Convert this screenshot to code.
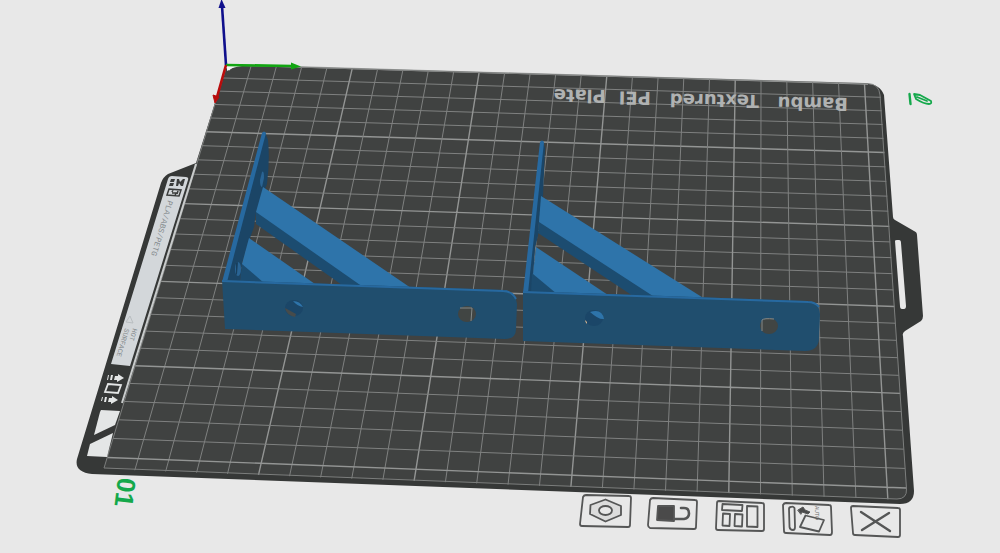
import React from 'react';

type Point = [number, number];

const SCENE_WIDTH = 1000;
const SCENE_HEIGHT = 553;
const BED_SIZE = 256;

// Screen corners of the printable area: back left, back right, front right, front left
const BED_CORNERS: Point[] = [
  [226, 65],
  [880, 84],
  [907, 500],
  [104, 469],
];

const createProjection = ([p0, p1, p2, p3]: Point[]) => {
  const dx1 = p1[0] - p2[0];
  const dx2 = p3[0] - p2[0];
  const dx3 = p0[0] - p1[0] + p2[0] - p3[0];
  const dy1 = p1[1] - p2[1];
  const dy2 = p3[1] - p2[1];
  const dy3 = p0[1] - p1[1] + p2[1] - p3[1];
  const det = dx1 * dy2 - dx2 * dy1;
  const g = (dx3 * dy2 - dx2 * dy3) / det;
  const h = (dx1 * dy3 - dx3 * dy1) / det;

  return (x: number, y: number): Point => {
    const u = x / BED_SIZE;
    const v = y / BED_SIZE;
    const w = g * u + h * v + 1;
    return [
      ((p1[0] - p0[0] + g * p1[0]) * u + (p3[0] - p0[0] + h * p3[0]) * v + p0[0]) / w,
      ((p1[1] - p0[1] + g * p1[1]) * u + (p3[1] - p0[1] + h * p3[1]) * v + p0[1]) / w,
    ];
  };
};

const project = createProjection(BED_CORNERS);

const linePath = (from: Point, to: Point) => `M${from.join(' ')}L${to.join(' ')}`;

const BedGrid: React.FC = () => {
  const steps = Array.from({ length: 25 }, (_, i) => (i + 1) * 10);

  return (
    <g fill="none">
      {steps.map((mm) => (
        <path
          key={mm}
          d={
            linePath(project(mm, 0), project(mm, BED_SIZE)) +
            linePath(project(0, mm), project(BED_SIZE, mm))
          }
          stroke={mm % 50 === 0 ? '#939594' : '#7f8180'}
          strokeWidth={mm % 50 === 0 ? 1.4 : 1}
        />
      ))}
      <path
        d="M240 65.500L868 83.600Q879 84 880 95L906.500 489Q907 499 897 499L104 468L226 68"
        stroke="#7c7e7d"
      />
      <path d="M196 164L122 403" stroke="#c9cccc" strokeWidth="2" />
    </g>
  );
};

const Plate: React.FC = () => (
  <g>
    <path
      d="M229 71Q233 66 242 65.500L866 84Q880 84 884 95L893 217Q893 219 895 220L914 231Q917 232 917 235L923 316Q923 319 921 321L905 331Q902 333 903 336L914 491Q914 504 900 504L92 474Q74 472 77 459L161 183Q163 177 168 174L196 163L226 68Z"
      fill="#363837"
    />
    <path
      d="M229 71Q233 66 242 65.500L866 84Q880 84 880.500 96L907 490Q907 499 898 499L104 468L226 68Z"
      fill="#404241"
    />
    <path d="M240 65L868 84" stroke="#a3a5a4" strokeWidth="1.500" />
    <path d="M227 66L242 66Q232 67 227 71Z" fill="#f5f5f5" />
    <path d="M895 241Q895 240 897 240L899 240Q901 240 901 243L906 306Q906 309 904 309L902 309Q900 309 900 306Z" fill="#e8e8e8" />
  </g>
);

const SideLabel: React.FC = () => (
  <g>
    <path d="M172 176L186 177Q189 177 188 180L130 366L111 364L168 179Q169 176 172 176Z" fill="#d3d7da" />
    <g fill="#3a3c3b">
      <path d="M171 179L175 179L174 182L170 182ZM177 179L179 179L180 182L183 179L185 179L183 186L181 186L179 183L178 186L176 186ZM170 183L174 183L173 186L169 186Z" />
      <path
        d="M169 189L181 190L179 196L167 195ZM173 190L172 192M172 193L176 193L175 196M178 191L177 194"
        fill="none"
        stroke="#3a3c3b"
        strokeWidth="1.500"
      />
    </g>
    <g fill="#858b8e" fontFamily='"Liberation Mono", monospace'>
      <text transform="translate(168 200) rotate(107)" fontSize="8">PLA/ABS/PETG</text>
      <text transform="translate(133 328) rotate(107)" fontSize="7">HOT</text>
      <text transform="translate(125 328) rotate(107)" fontSize="7">SURFACE</text>
    </g>
    <path d="M130 316L133 323L126 322Z" fill="none" stroke="#b9bec1" />
    <g fill="#e4e6e6">
      <path d="M118 374L124 378L117 382L117 380L114 380L115 376L118 376ZM111 375L113 375L112 380L110 380ZM108 375L109 375L108 380L107 380Z" />
      <path d="M112 396L118 400L111 404L111 402L108 402L109 398L112 398ZM105 397L107 397L106 402L104 402ZM102 397L103 397L102 401L101 401Z" />
      <path d="M101 410L120 411L115 425L94 435L100 412Z" />
      <path d="M113 433L107 457L87 456L90 444Z" />
    </g>
    <path d="M108 384L121 385L118 393L105 392Z" fill="none" stroke="#e4e6e6" strokeWidth="1.800" />
  </g>
);

const PlateTitle: React.FC = () => (
  <g fill="#b0b2b2" fontFamily='"DejaVu Sans", sans-serif' fontWeight="bold" fontSize="18">
    <text transform="translate(848 98) rotate(181)">Bambu</text>
    <text transform="translate(759 95) rotate(181)">Textured</text>
    <text transform="translate(651 92) rotate(181)">PEI</text>
    <text transform="translate(606 90) rotate(181)">Plate</text>
  </g>
);

const Axes: React.FC = () => (
  <g strokeWidth="2.600">
    <path d="M226 65L222 6" stroke="#10108c" />
    <path d="M221.500 -1L225.500 8L218.500 8Z" fill="#10108c" />
    <path d="M226 65L292 66" stroke="#12a512" />
    <path d="M301 66.500L291 69.500L291 62.500Z" fill="#12a512" />
    <path d="M226 65L217 97" stroke="#b80c0c" />
    <path d="M215 103L213 95L219 97Z" fill="#b80c0c" stroke="#b80c0c" strokeWidth="1" />
  </g>
);

const LIGHT = '#2e74aa';
const EDGE = '#2769a0';
const SIDE = '#1c4c70';
const FRONT = '#204e6e';

const LeftBracket: React.FC = () => (
  <g>
    <path d="M265 132L268 140Q270 160 267 184L256 212L254 227L250 238L242 263L240 282L226 281Z" fill="#1b4566" />
    <path d="M262 172Q264 170 264 178L262 187Q260 187 260 180Z" fill="#2a6494" />
    <ellipse cx="238" cy="269" rx="3" ry="7" fill="#2a6494" />
    <path d="M236 263L238 262L237 274L236 275Z" fill="#183f5d" />
    <path d="M256 211L364 285L342 285L256 224Z" fill={SIDE} />
    <path d="M263 187L411 288L363 287L256 212Z" fill={LIGHT} />
    <path d="M242 263L266 282L240 282Z" fill={SIDE} />
    <path d="M249 238L315 284L264 283L242 264Z" fill={LIGHT} />
    <path d="M262 133Q264 130 266 133L227 282L222 282Z" fill={EDGE} />
    <path d="M222 280L503 290Q516 291 517 304L516 329Q516 339 505 339L225 329Z" fill={FRONT} />
    <path d="M222 281L503 291Q512 291 516 299" fill="none" stroke={EDGE} strokeWidth="2" />
    <ellipse cx="294" cy="308" rx="9" ry="8" fill="#1b4668" />
    <path d="M293 301Q300 301 303 307Q297 306 293 301Z" fill={LIGHT} />
    <path d="M285 308L296 314L295 317Q286 315 285 308Z" fill="#464b4b" />
    <ellipse cx="467" cy="314" rx="9" ry="8" fill="#414543" />
    <path d="M460 308L472 308L471 321" fill="none" stroke="#858a89" />
  </g>
);

const RightBracket: React.FC = () => (
  <g>
    <path d="M543 142L545 148L543 196L539 222L538 236L535 248L532 292L526 292Z" fill="#1b4566" />
    <path d="M539 221L658 296L633 296L538 233Z" fill={SIDE} />
    <path d="M541 196L705 299L656 298L539 222Z" fill={LIGHT} />
    <path d="M532 273L560 293L531 292Z" fill={SIDE} />
    <path d="M536 247L608 295L557 294L533 274Z" fill={LIGHT} />
    <path d="M540 142Q542 139 544 142L528 293L523 293Z" fill={EDGE} />
    <path d="M523 291L808 301Q819 302 820 314L819 339Q818 351 805 351L523 341Z" fill={FRONT} />
    <path d="M523 292L808 302Q815 302 819 307" fill="none" stroke={EDGE} strokeWidth="2" />
    <ellipse cx="594" cy="318" rx="9" ry="8" fill="#1b4668" />
    <path d="M590 312Q602 308 604 319Q599 320 590 312Z" fill={LIGHT} />
    <path d="M585 320L587 322L587 324Q585 322 585 320Z" fill="#d7b48f" />
    <ellipse cx="769" cy="326" rx="9" ry="8" fill="#414543" />
    <path d="M762 331L762 320Q764 318 774 319" fill="none" stroke="#858a89" />
  </g>
);

interface PlateAction {
  label: string;
  x: number;
  y: number;
  width: number;
  height: number;
  drawing: React.ReactNode;
}

const plateActions: PlateAction[] = [
  {
    label: 'Plate settings',
    x: 578,
    y: 492,
    width: 56,
    height: 38,
    drawing: (
      <>
        <path d="M586 495L629 496Q631 496 631 498L630 525Q630 527 628 527L582 526Q580 526 580 524L583 497Q584 495 586 495Z" />
        <path d="M605.500 499.500L621 506L621 515L605.500 521.500L590 514L590.500 505Z" fill="#dcdcdc" />
        <ellipse cx="605.500" cy="510.500" rx="6.500" ry="4.500" fill="#e8e8e8" />
      </>
    ),
  },
  {
    label: 'Lock plate',
    x: 646,
    y: 495,
    width: 54,
    height: 37,
    drawing: (
      <>
        <path d="M653 498L695 500Q697 500 697 502L696 527Q696 529 694 529L650 528Q648 527 648 525L650 500Q651 498 653 498Z" />
        <path d="M658 506L674 506L674 521L657 520Z" fill="#4a4a4a" />
        <path d="M674 519L684 519Q689 518 689 513.500Q689 508 684 508L681 508" strokeWidth="2.600" />
      </>
    ),
  },
  {
    label: 'Arrange objects',
    x: 714,
    y: 498,
    width: 53,
    height: 36,
    drawing: (
      <>
        <path d="M719 501L762 503Q764 503 764 505L764 529Q764 531 762 531L718 530Q716 530 716 528L717 503Q717 501 719 501Z" />
        <path d="M722.500 504L742.500 505L742 511L722 510ZM723 513.500L730 514L729.500 526L722.500 525.500ZM735 514L742.500 514.500L742 526.500L734.500 526ZM747 506L757.500 506.500L757.500 527L747 526.500Z" />
      </>
    ),
  },
  {
    label: 'Auto orient',
    x: 781,
    y: 500,
    width: 54,
    height: 38,
    drawing: (
      <>
        <path d="M786 503L829 505Q831 505 831 507L832 532Q832 535 830 535L786 533Q784 533 784 531L783 505Q784 503 786 503Z" />
        <path d="M791 507Q793 506 794.500 508L795 527Q795 530 793 530Q790 530 789.500 527L789 509Q789 507 791 507Z" />
        <path d="M805.500 515.500L824 520L819 531.500L800 527Z" />
        <path d="M798 510L803 507L805 510L810 512L808 514L802 512L801 514Z" fill="#4a4a4a" strokeWidth="1" />
        <text
          transform="translate(815 506) rotate(90)"
          fill="#6a6a6a"
          stroke="none"
          fontFamily='"Liberation Sans", sans-serif'
          fontSize="5"
        >
          AUTO
        </text>
      </>
    ),
  },
  {
    label: 'Delete plate',
    x: 849,
    y: 503,
    width: 54,
    height: 37,
    drawing: (
      <>
        <path d="M853 506L898 508Q900 508 900 510L900 535Q900 537 898 537L855 535Q853 535 853 533L851 508Q851 506 853 506Z" />
        <path d="M861 512L890 531M889 513L862 530" strokeWidth="2.400" />
      </>
    ),
  },
  {
    label: 'Edit plate name',
    x: 904,
    y: 89,
    width: 32,
    height: 20,
    drawing: (
      <g stroke="#14a84b">
        <path d="M909.500 94L910.500 104" strokeWidth="2.400" />
        <path d="M914 94L920 95L931 101Q932 104 929 104Q924 104 916 99ZM917 97L927 101" />
      </g>
    ),
  },
];

const ActionButton: React.FC<{ action: PlateAction }> = ({ action }) => {
  const { label, x, y, width, height, drawing } = action;

  return (
    <button
      type="button"
      title={label}
      aria-label={label}
      className="absolute cursor-pointer hover:opacity-70 transition-opacity"
      style={{
        left: `${(x / SCENE_WIDTH) * 100}%`,
        top: `${(y / SCENE_HEIGHT) * 100}%`,
        width: `${(width / SCENE_WIDTH) * 100}%`,
      }}
    >
      <svg
        viewBox={`${x} ${y} ${width} ${height}`}
        className="block w-full"
        fill="none"
        stroke="#555656"
        strokeWidth="1.800"
        strokeLinejoin="round"
        strokeLinecap="round"
      >
        {drawing}
      </svg>
    </button>
  );
};

const App: React.FC = () => {
  return (
    <main className="min-h-screen bg-[#e8e8e8] overflow-hidden">
      <div className="relative w-full">
        <svg viewBox={`0 0 ${SCENE_WIDTH} ${SCENE_HEIGHT}`} className="block w-full">
          <Plate />
          <BedGrid />
          <SideLabel />
          <PlateTitle />
          <Axes />
          <LeftBracket />
          <RightBracket />
          <text
            transform="translate(118 477) rotate(97)"
            fill="#14a84b"
            fontFamily='"Liberation Sans", sans-serif'
            fontWeight="bold"
            fontSize="26"
          >
            01
          </text>
        </svg>
        {plateActions.map((action) => (
          <ActionButton key={action.label} action={action} />
        ))}
      </div>
    </main>
  );
};

export default App;
